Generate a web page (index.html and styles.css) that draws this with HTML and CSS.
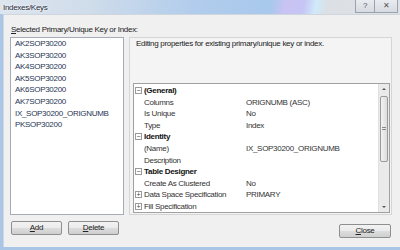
FILE: index.html
```html
<!DOCTYPE html>
<html lang="en">
<head>
    <meta charset="UTF-8">
    <title>Indexes/Keys</title>
    <link rel="stylesheet" href="styles.css">
</head>
<body>

    <div class="window">
        <!-- Title bar -->
        <div class="titlebar">
            <span class="title">Indexes/Keys</span>
            <div class="caption-btns">
                <span class="cbtn">?</span>
                <span class="cbtn cbtn-close">&#x2715;</span>
            </div>
        </div>

        <div class="frame">
            <div class="client">
                <div class="caption"><u>S</u>elected Primary/Unique Key or Index:</div>

                <div class="main">
                    <!-- Left: list of keys -->
                    <div class="left">
                        <ul class="keylist">
                            <li>AK2SOP30200</li>
                            <li>AK3SOP30200</li>
                            <li>AK4SOP30200</li>
                            <li>AK5SOP30200</li>
                            <li>AK6SOP30200</li>
                            <li>AK7SOP30200</li>
                            <li>IX_SOP30200_ORIGNUMB</li>
                            <li>PKSOP30200</li>
                        </ul>
                        <div class="btnrow">
                            <button class="btn"><u>A</u>dd</button>
                            <button class="btn"><u>D</u>elete</button>
                        </div>
                    </div>

                    <!-- Right: property grid -->
                    <div class="right">
                        <div class="panel">
                            <p class="hint">Editing properties for existing primary/unique key or index.</p>
                            <div class="grid">
                                <div class="rows">
                                    <div class="row group"><span class="tog">&minus;</span><span class="name">(General)</span></div>
                                    <div class="row"><span class="tog"></span><span class="name">Columns</span><span class="val">ORIGNUMB (ASC)</span></div>
                                    <div class="row"><span class="tog"></span><span class="name">Is Unique</span><span class="val">No</span></div>
                                    <div class="row"><span class="tog"></span><span class="name">Type</span><span class="val">Index</span></div>
                                    <div class="row group"><span class="tog">&minus;</span><span class="name">Identity</span></div>
                                    <div class="row"><span class="tog"></span><span class="name">(Name)</span><span class="val">IX_SOP30200_ORIGNUMB</span></div>
                                    <div class="row"><span class="tog"></span><span class="name">Description</span><span class="val"></span></div>
                                    <div class="row group"><span class="tog">&minus;</span><span class="name">Table Designer</span></div>
                                    <div class="row"><span class="tog"></span><span class="name">Create As Clustered</span><span class="val">No</span></div>
                                    <div class="row"><span class="tog">+</span><span class="name">Data Space Specification</span><span class="val">PRIMARY</span></div>
                                    <div class="row"><span class="tog">+</span><span class="name">Fill Specification</span></div>
                                </div>
                                <div class="scrollbar">
                                    <span class="arrow up"></span>
                                    <div class="track"><div class="thumb"><span class="grip"></span></div></div>
                                    <span class="arrow down"></span>
                                </div>
                            </div>
                        </div>
                        <div class="btnrow btnrow-end">
                            <button class="btn"><u>C</u>lose</button>
                        </div>
                    </div>
                </div>
            </div>
        </div>
    </div>

</body>
</html>
```
FILE: styles.css
```css
/* Whole dialog */
body {
    margin: 0;
    width: 400px;
    height: 250px;
    overflow: hidden;
    font-family: "Liberation Sans", Arial, sans-serif;
    font-size: 8px;
    letter-spacing: -0.3px;
    color: #222;
}

.window {
    height: 250px;
    display: flex;
    flex-direction: column;
    background: #a9c6e6;
}

/* Aero title bar */
.titlebar {
    height: 14px;
    display: flex;
    align-items: center;
    justify-content: space-between;
    background: linear-gradient(100deg, #dde5ee 0, #cfdcea 90px, #b2cdec 190px, #a8c8ec 268px, #c9c3f3 282px, #c6c5f5 300px, #cfeafa 312px, #dcdfe4 324px, #dfe1e5 400px);
}

.title {
    padding-left: 3px;
    color: #1e2a38;
    text-shadow: 0 0 3px #fff, 0 0 2px #fff;
}

.caption-btns {
    display: flex;
    align-self: flex-start;
    margin-right: 2px;
}

.cbtn {
    width: 18px;
    height: 12px;
    line-height: 12px;
    text-align: center;
    font-size: 8px;
    color: #555;
    border: 1px solid #9aa3ad;
    border-top: none;
    background: linear-gradient(#e8ecf0, #d6dbe1);
}

.cbtn + .cbtn {
    border-left: none;
    width: 22px;
}

.frame {
    flex: 1;
    padding: 0 0 3px 3px;
}

.client {
    height: 100%;
    background: #f0f0f0;
    border-top: 1px solid #cfd6de;
    border-left: 1px solid #cfd6de;
    box-sizing: border-box;
}

.caption {
    padding: 9px 0 0 7px;
    line-height: 12px;
    color: #222;
}

.main {
    display: flex;
    margin-top: 1px;
}

/* Left column */
.left {
    width: 114px;
    margin-left: 6px;
}

.keylist {
    list-style: none;
    margin: 0;
    padding: 0 0 0 4px;
    height: 178px;
    box-sizing: border-box;
    background: #fff;
    border: 1px solid #a5acb5;
    color: #1f3553;
}

.keylist li {
    line-height: 11.6px;
    white-space: nowrap;
}

.btnrow {
    display: flex;
    gap: 6px;
    margin-top: 6px;
    padding-left: 1px;
}

.btn {
    width: 51px;
    height: 14px;
    padding: 0;
    font: inherit;
    letter-spacing: inherit;
    color: #222;
    line-height: 12px;
    border: 1px solid #8e8f8f;
    border-radius: 2px;
    background: linear-gradient(#f2f2f2 0, #ebebeb 50%, #dddddd 50%, #cfcfcf 100%);
}

/* Right column */
.right {
    width: 263px;
    margin-left: 5px;
}

.panel {
    height: 178px;
    box-sizing: border-box;
    border: 1px solid #d5d5d5;
    background: #f4f4f4;
    padding: 0 1px 0 3px;
}

.hint {
    margin: 0 0 34px 3px;
    line-height: 11px;
    color: #222;
}

.grid {
    display: flex;
    height: 130px;
    box-sizing: border-box;
    border: 1px solid #a0a0a0;
    background: #fff;
}

.rows {
    flex: 1;
    padding-top: 1px;
}

.row {
    display: flex;
    align-items: center;
    height: 11.55px;
    color: #333;
}

.tog {
    width: 9px;
    flex: none;
    display: flex;
    justify-content: center;
}

.row .tog:not(:empty) {
    width: 5px;
    height: 5px;
    margin: 0 1px;
    border: 1px solid #9a9a9a;
    font-size: 7px;
    line-height: 5px;
    letter-spacing: 0;
    color: #444;
    overflow: hidden;
}

.name {
    width: 102px;
    padding-left: 1px;
    white-space: nowrap;
}

.group .name {
    font-weight: bold;
    color: #111;
}

.val {
    white-space: nowrap;
}

/* Scrollbar */
.scrollbar {
    width: 10px;
    display: flex;
    flex-direction: column;
    background: #eaeaea;
    border-left: 1px solid #e0e0e0;
}

.arrow {
    height: 10px;
    display: flex;
    align-items: center;
    justify-content: center;
}

.arrow::after {
    content: "";
    border-left: 2px solid transparent;
    border-right: 2px solid transparent;
}

.up::after {
    border-bottom: 2px solid #555;
}

.down::after {
    border-top: 2px solid #555;
}

.track {
    flex: 1;
    padding-top: 2px;
}

.thumb {
    height: 64px;
    margin: 0 1px;
    border: 1px solid #9a9a9a;
    border-radius: 2px;
    background: linear-gradient(90deg, #f3f3f3, #dcdcdc);
    display: flex;
    align-items: center;
    justify-content: center;
}

.grip {
    width: 4px;
    height: 4px;
    background: repeating-linear-gradient(#888 0, #888 1px, transparent 1px, transparent 2px);
}

.btnrow-end {
    justify-content: flex-end;
    margin-top: 9px;
    padding-right: 1px;
}

.btnrow-end .btn {
    width: 52px;
}
```
